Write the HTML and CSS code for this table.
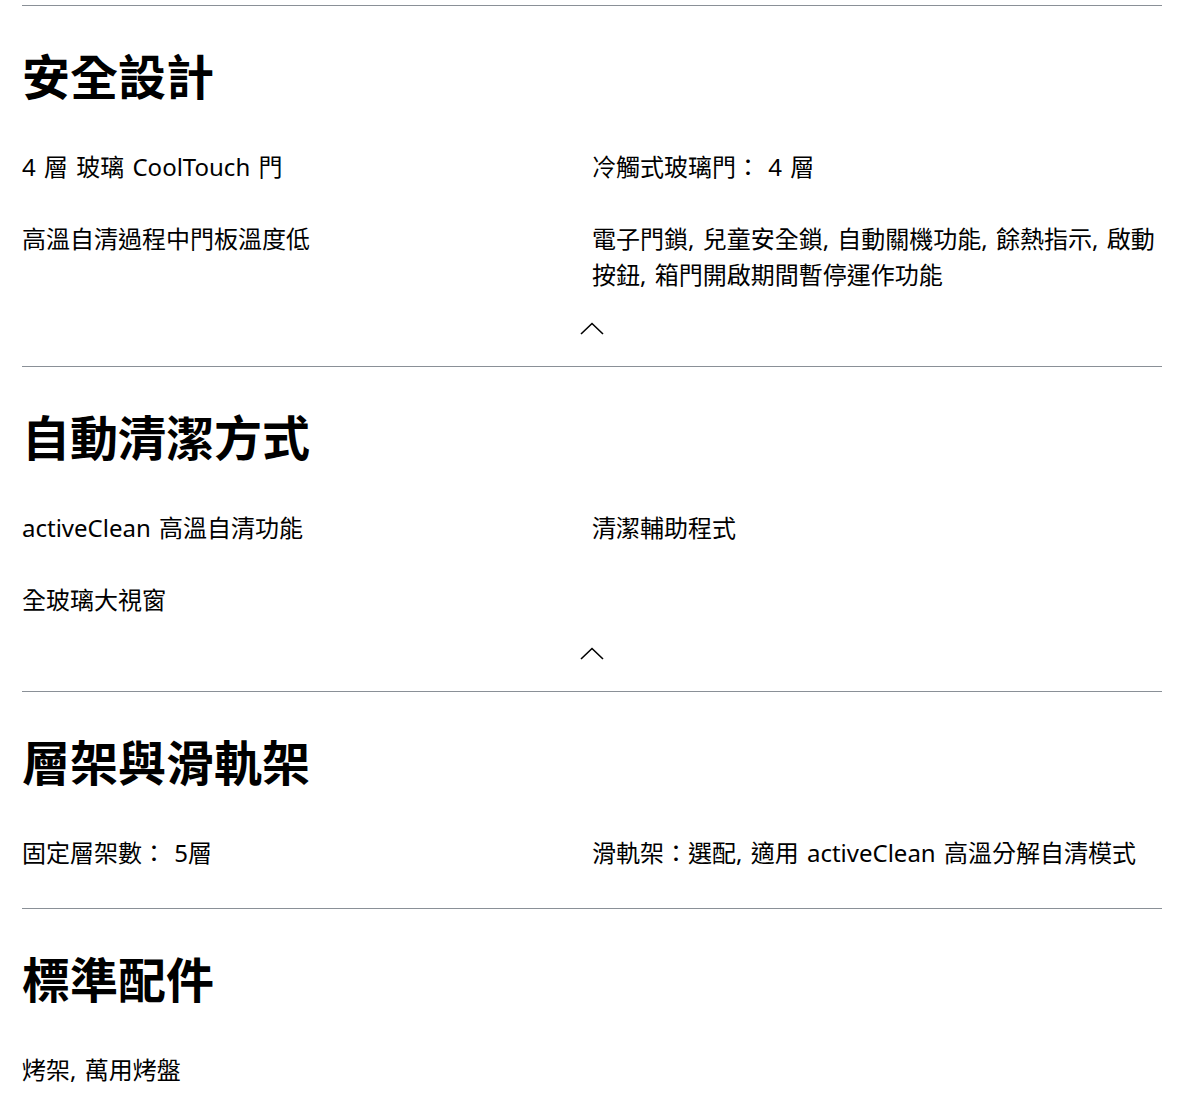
FILE: index.html
```html
<!DOCTYPE html>
<html lang="zh-Hant">
<head>
    <meta charset="UTF-8">
    <meta name="viewport" content="width=device-width, initial-scale=1.0">
    <title>規格</title>
    <link rel="stylesheet" href="styles.css">
</head>
<body>

<div class="specs">
    <section class="spec-group">
        <h2>安全設計</h2>
        <div class="spec-list">
            <p>4 層 玻璃 CoolTouch 門</p>
            <p>冷觸式玻璃門： 4 層</p>
            <p>高溫自清過程中門板溫度低</p>
            <p>電子門鎖, 兒童安全鎖, 自動關機功能, 餘熱指示, 啟動按鈕, 箱門開啟期間暫停運作功能</p>
        </div>
        <button class="toggle" aria-label="收合">
            <svg width="24" height="24" viewBox="0 0 24 24"><path d="M1 18 L12 7.5 L23 18" fill="none" stroke="#000" stroke-width="1.6"/></svg>
        </button>
    </section>

    <section class="spec-group">
        <h2>自動清潔方式</h2>
        <div class="spec-list">
            <p>activeClean 高溫自清功能</p>
            <p>清潔輔助程式</p>
            <p>全玻璃大視窗</p>
        </div>
        <button class="toggle" aria-label="收合">
            <svg width="24" height="24" viewBox="0 0 24 24"><path d="M1 18 L12 7.5 L23 18" fill="none" stroke="#000" stroke-width="1.6"/></svg>
        </button>
    </section>

    <section class="spec-group">
        <h2>層架與滑軌架</h2>
        <div class="spec-list">
            <p>固定層架數： 5層</p>
            <p>滑軌架：選配, 適用 activeClean 高溫分解自清模式</p>
        </div>
    </section>

    <section class="spec-group">
        <h2>標準配件</h2>
        <div class="spec-list">
            <p>烤架, 萬用烤盤</p>
        </div>
    </section>
</div>

</body>
</html>
```

FILE: styles.css
```css
body {
    font-family: "Noto Sans", "Noto Sans CJK TC", sans-serif;
    color: #000;
    background: #fff;
    margin: 0;
    padding: 5px 0 0 22px;
}
.specs {
    width: 1140px;
}
.spec-group {
    border-top: 1px solid #8a9097;
    padding-bottom: 37px;
}
.spec-group h2 {
    font-size: 48px;
    font-weight: 700;
    line-height: 60px;
    margin: 41px 0 42px;
}
.spec-list {
    display: grid;
    grid-template-columns: 1fr 1fr;
    row-gap: 36px;
    align-items: start;
}
.spec-list p {
    margin: 0;
    font-size: 24px;
    line-height: 36px;
    word-spacing: 2px;
}
.toggle {
    display: block;
    margin: 23px auto -11px;
    padding: 0;
    border: none;
    background: none;
    width: 24px;
    height: 24px;
    cursor: pointer;
}
.toggle svg {
    display: block;
}
```
